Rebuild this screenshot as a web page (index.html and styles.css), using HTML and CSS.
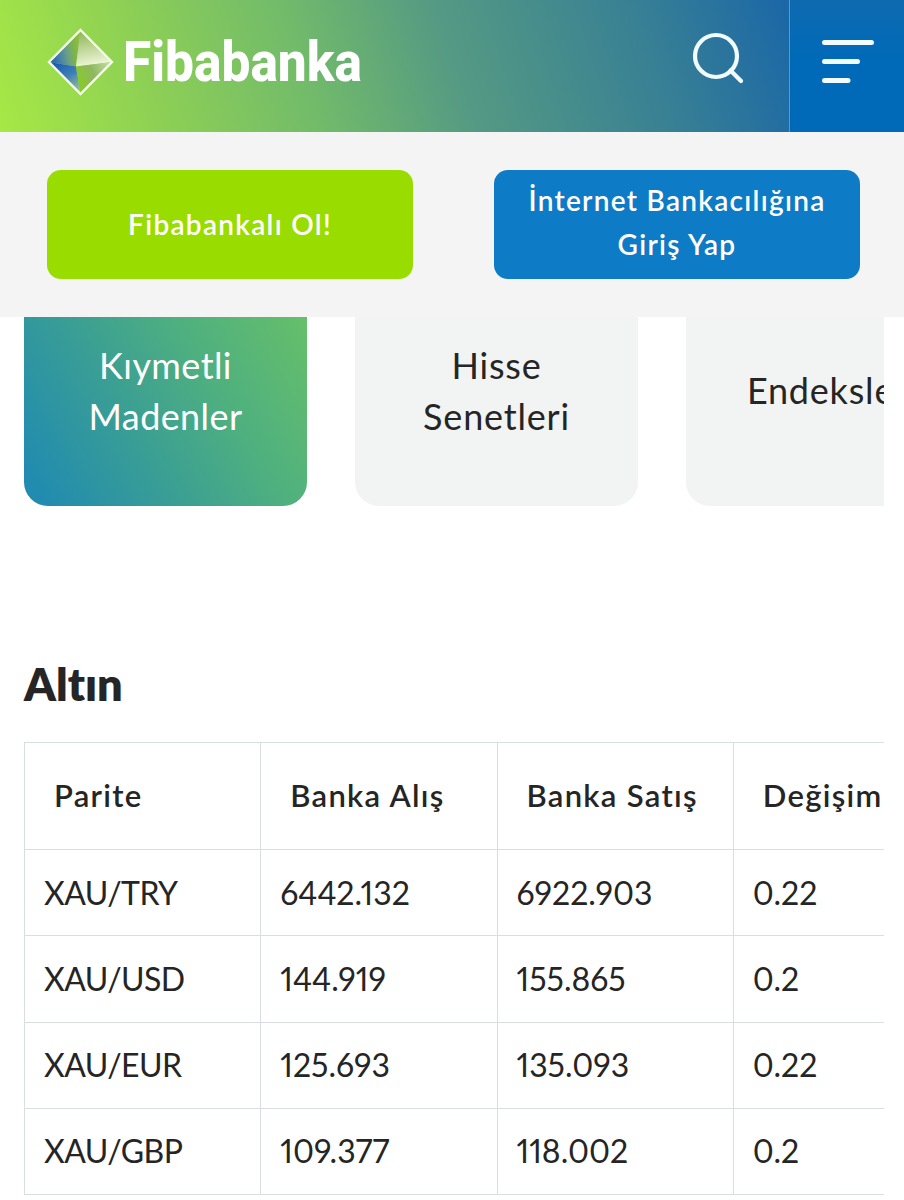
FILE: index.html
```html
<!DOCTYPE html>
<html lang="tr">
  <head>
    <meta charset="utf-8">
    <meta name="viewport" content="width=device-width, initial-scale=1.0">
    <title>Fibabanka</title>
    <link rel="stylesheet" href="styles.css">
  </head>
  <body>
    <header class="header">
      <a class="logo" href="#">
        <svg class="logo-mark" width="68" height="68" viewBox="0 0 68 68">
          <defs>
            <linearGradient id="nw" x1="0" y1="0.6" x2="1" y2="0.4">
              <stop offset="0" stop-color="#1e62bd"/>
              <stop offset="0.55" stop-color="#6b9e8c"/>
              <stop offset="0.75" stop-color="#7cb44a"/>
              <stop offset="1" stop-color="#8fbe45"/>
            </linearGradient>
            <linearGradient id="ne" x1="0.2" y1="0" x2="0.4" y2="1">
              <stop offset="0" stop-color="#8cb454"/>
              <stop offset="1" stop-color="#f0f7da"/>
            </linearGradient>
            <linearGradient id="sw" x1="0.2" y1="0" x2="0.8" y2="1">
              <stop offset="0" stop-color="#1758b8"/>
              <stop offset="0.5" stop-color="#3f80b4"/>
              <stop offset="1" stop-color="#9dc596"/>
            </linearGradient>
            <linearGradient id="se" x1="0" y1="0.6" x2="1" y2="0.2">
              <stop offset="0" stop-color="#86cc24"/>
              <stop offset="0.5" stop-color="#8fb760"/>
              <stop offset="1" stop-color="#c3dea0"/>
            </linearGradient>
          </defs>
          <path d="M33.500 2 29 38.500 2 34z" fill="url(#nw)"/>
          <path d="M33.500 2 65 34 29 38.500z" fill="url(#ne)"/>
          <path d="M2 34 29 38.500 33.500 66z" fill="url(#sw)"/>
          <path d="M29 38.500 65 34 33.500 66z" fill="url(#se)"/>
          <path d="M33.500 2 65 34 33.500 66 2 34z" fill="none" stroke="#f4fdea" stroke-width="2.4"/>
        </svg>
        <svg class="logo-name" width="240" height="56" viewBox="0 0 240 56">
          <text x="-2" y="47" textLength="239" lengthAdjust="spacingAndGlyphs">Fibabanka</text>
        </svg>
      </a>
      <button class="search" aria-label="Ara">
        <svg width="54" height="54" viewBox="0 0 54 54" fill="none" stroke="#f0fcff" stroke-width="4.2" stroke-linecap="round">
          <circle cx="25" cy="26" r="21"/>
          <path d="M39.5 40.5 50 51"/>
        </svg>
      </button>
      <button class="menu" aria-label="Menü">
        <svg width="54" height="46" viewBox="0 0 54 46" stroke="#f0fcff" stroke-width="5" stroke-linecap="round">
          <path d="M3.5 3.5h47M3.5 22.5h33M3.5 41.5h23.500"/>
        </svg>
      </button>
    </header>

    <div class="actions">
      <a class="btn btn-green" href="#">Fibabankalı Ol!</a>
      <a class="btn btn-blue" href="#">İnternet Bankacılığına<br>Giriş Yap</a>
    </div>

    <main class="content">
      <nav class="tabs">
        <a class="tab active" href="#">Kıymetli<br>Madenler</a>
        <a class="tab" href="#">Hisse<br>Senetleri</a>
        <a class="tab" href="#">Endeksler</a>
      </nav>

      <h2>Altın</h2>
      <div class="table-wrap">
        <table>
          <tr><th>Parite</th><th>Banka Alış</th><th>Banka Satış</th><th>Değişim</th></tr>
          <tr><td>XAU/TRY</td><td>6442.132</td><td>6922.903</td><td>0.22</td></tr>
          <tr><td>XAU/USD</td><td>144.919</td><td>155.865</td><td>0.2</td></tr>
          <tr><td>XAU/EUR</td><td>125.693</td><td>135.093</td><td>0.22</td></tr>
          <tr><td>XAU/GBP</td><td>109.377</td><td>118.002</td><td>0.2</td></tr>
        </table>
      </div>
    </main>
  </body>
</html>
```
FILE: styles.css
```css
* {
  box-sizing: border-box;
}

body {
  margin: 0;
  height: 1200px;
  overflow: hidden;
  font-family: Lato, "Open Sans", sans-serif;
  font-variant-ligatures: none;
  color: #252525;
  background-color: #fff;
}

a {
  color: inherit;
  text-decoration: none;
}

button {
  border: none;
  padding: 0;
  background: none;
}

svg {
  display: block;
}

.header {
  display: flex;
  height: 132px;
  background: linear-gradient(72deg, #a6e845 0%, #8ed054 17%, #72bb6a 34%, #559a83 50%, #377f95 72%, #1c68a6 87%, #1667aa 100%);
}

.logo {
  display: flex;
  flex: 1;
  padding: 28px 0 0 47px;
}

.logo-name {
  margin-left: 10px;
  margin-top: 6px;
  overflow: visible;
}

.logo-name text {
  font-family: Roboto, sans-serif;
  font-size: 55px;
  font-weight: 800;
  fill: #fff;
}

.search {
  width: 98px;
  padding-top: 2px;
  margin-bottom: 20px;
}

.menu {
  display: flex;
  width: 115px;
  padding: 39px 0 0 31px;
  border-left: 1px solid #4b9be0;
  background: linear-gradient(#0e6ab0, #006ab8 45%);
}

.actions {
  display: flex;
  justify-content: space-between;
  height: 185px;
  padding: 38px 44px 0 47px;
  background-color: #f4f4f4;
}

.btn {
  display: flex;
  align-items: center;
  justify-content: center;
  width: 366px;
  height: 109px;
  border-radius: 14px;
  color: #fff;
  font-size: 28px;
  font-weight: 600;
  letter-spacing: 1.3px;
  line-height: 44px;
  text-align: center;
}

.btn-green {
  padding-bottom: 2px;
  background-color: #99dd00;
}

.btn-blue {
  padding-bottom: 5px;
  background-color: #0d7bc5;
}

.content {
  padding: 0 20px 0 24px;
}

.tabs {
  display: flex;
  gap: 48px;
  height: 189px;
  overflow: hidden;
}

.tab {
  display: flex;
  flex: none;
  align-items: center;
  justify-content: center;
  width: 283px;
  padding-bottom: 42px;
  border-radius: 0 0 24px 24px;
  background-color: #f2f4f4;
  font-size: 36px;
  letter-spacing: 0.8px;
  line-height: 51px;
  text-align: center;
}

.tab.active {
  color: #fff;
  letter-spacing: 0.4px;
  background: linear-gradient(60deg, #218bb0 5%, #3ca092 42%, #4fb07f 67%, #66bf6a 100%);
}

h2 {
  margin: 148px 0 0;
  height: 88px;
  font-size: 45px;
  font-weight: 800;
  line-height: 60px;
}

.table-wrap {
  overflow: hidden;
}

table {
  width: 946px;
  table-layout: fixed;
  border-collapse: collapse;
}

th,
td {
  border: 1px solid #d9dee1;
  text-align: left;
  white-space: nowrap;
}

th {
  height: 107px;
  padding: 0 0 2px 29px;
  font-size: 31px;
  font-weight: 600;
  letter-spacing: 1.3px;
}

td {
  height: 86.25px;
  padding: 0 0 1px 19px;
  font-size: 32px;
  font-variant-numeric: proportional-nums;
}

td:first-child {
  letter-spacing: -0.6px;
}
```
